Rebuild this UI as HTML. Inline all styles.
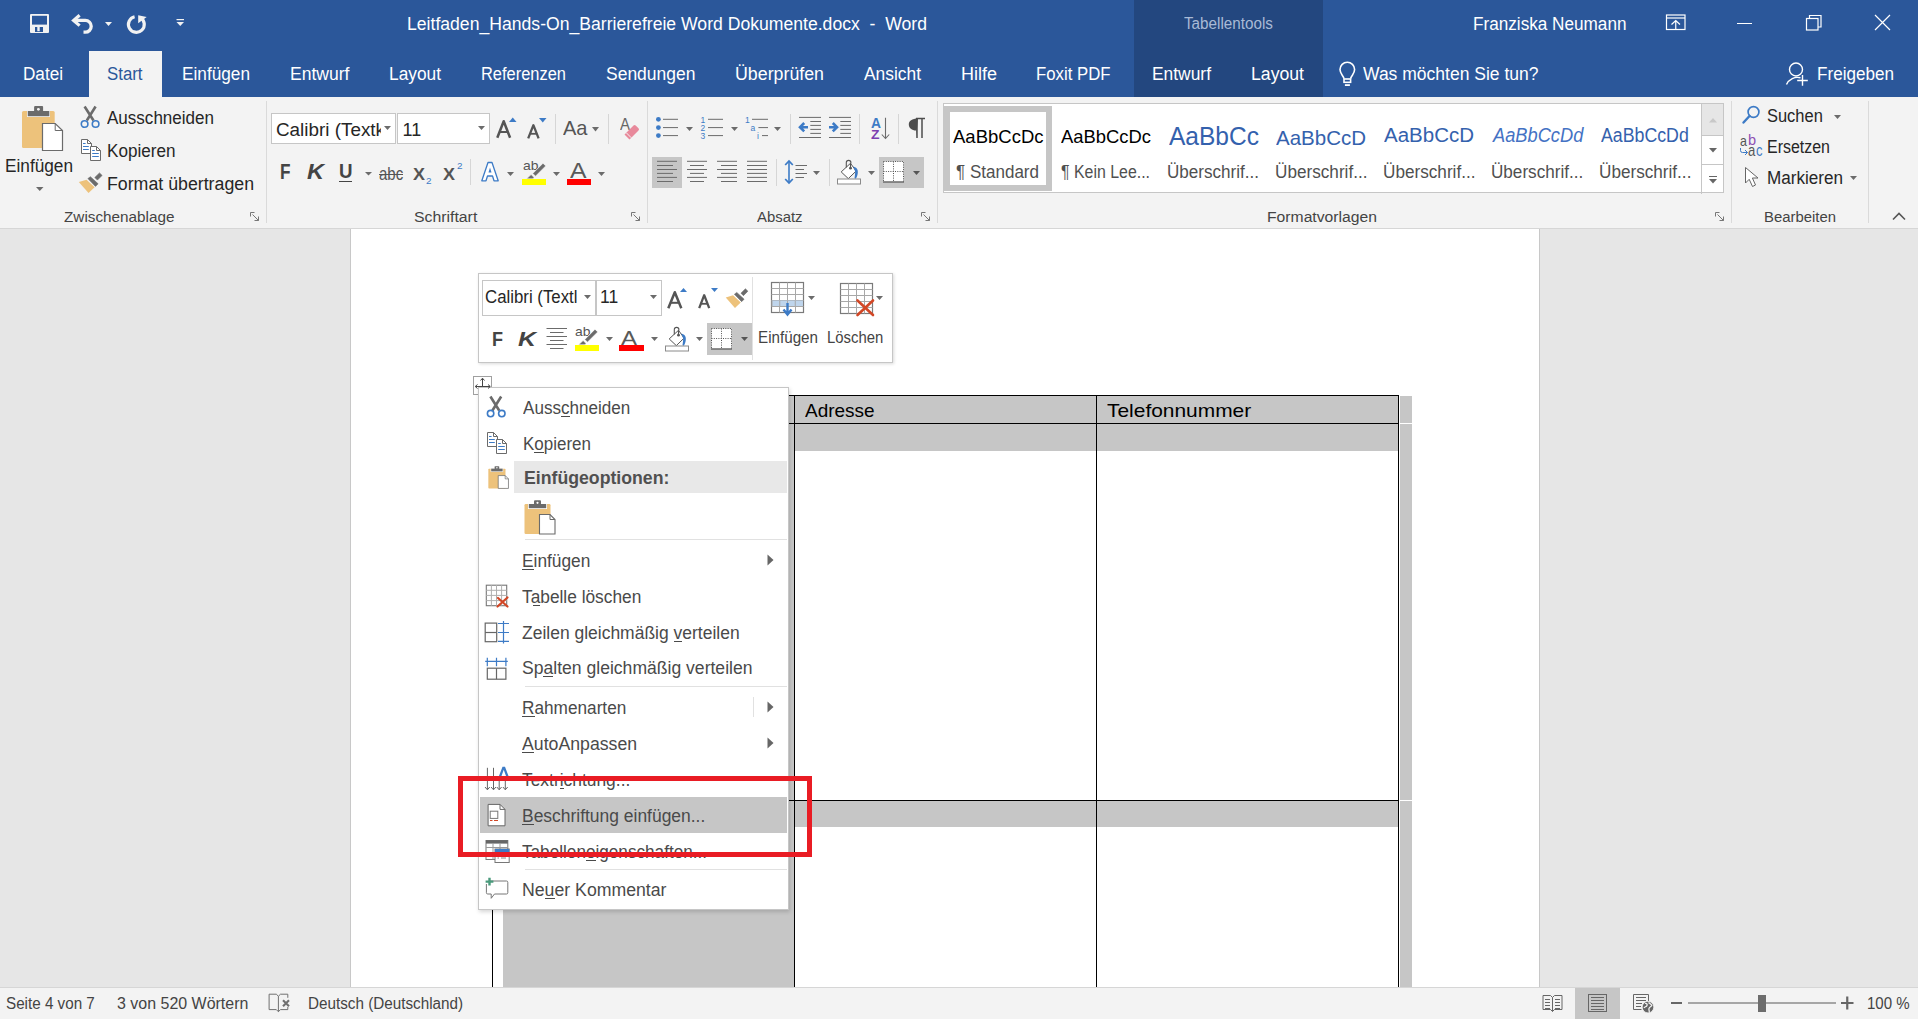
<!DOCTYPE html>
<html><head><meta charset="utf-8"><title>Word</title><style>
html,body{margin:0;padding:0}
body{width:1918px;height:1019px;overflow:hidden;position:relative;font-family:"Liberation Sans",sans-serif;background:#e6e6e6}
.a{position:absolute}
.t{position:absolute;white-space:pre;line-height:1;transform-origin:0 0}
svg{overflow:visible}
</style></head><body>
<div class="a" style="left:0px;top:0px;width:1918px;height:97px;background:#2b579a;"></div>
<div class="a" style="left:1134px;top:0px;width:189px;height:97px;background:#23477f;"></div>
<div class="a" style="left:89px;top:51px;width:73px;height:46px;background:#f3f3f3;"></div>
<div class="a" style="left:0px;top:97px;width:1918px;height:131px;background:#f3f3f3;"></div>
<div class="a" style="left:0px;top:228px;width:1918px;height:1px;background:#d6d6d6;"></div>
<div class="a" style="left:0px;top:229px;width:1918px;height:758px;background:#e6e6e6;"></div>
<div class="a" style="left:351px;top:229px;width:1188px;height:758px;background:#ffffff;"></div>
<div class="a" style="left:350px;top:229px;width:1px;height:758px;background:#c8c8c8;"></div>
<div class="a" style="left:1539px;top:229px;width:1px;height:758px;background:#c8c8c8;"></div>
<div class="a" style="left:0px;top:987px;width:1918px;height:1px;background:#d6d6d6;"></div>
<div class="a" style="left:0px;top:988px;width:1918px;height:31px;background:#f3f3f3;"></div>
<div class="t" style="left:407px;top:15.79px;font-size:17.5px;color:#fff;transform:scaleX(1.0061);">Leitfaden_Hands-On_Barrierefreie Word Dokumente.docx  -  Word</div>
<div class="t" style="left:1184px;top:15.79px;font-size:15.6px;color:#a9bad6;transform:scaleX(0.9773);">Tabellentools</div>
<div class="t" style="left:1473px;top:15.79px;font-size:17.5px;color:#fff;transform:scaleX(0.9802);">Franziska Neumann</div>
<div class="t" style="left:22.5px;top:64.76px;font-size:18px;color:#fff;transform:scaleX(0.9519);">Datei</div>
<div class="t" style="left:182px;top:64.76px;font-size:18px;color:#fff;transform:scaleX(0.9569);">Einfügen</div>
<div class="t" style="left:290px;top:64.76px;font-size:18px;color:#fff;transform:scaleX(0.9750);">Entwurf</div>
<div class="t" style="left:389px;top:64.76px;font-size:18px;color:#fff;transform:scaleX(0.9622);">Layout</div>
<div class="t" style="left:481px;top:64.76px;font-size:18px;color:#fff;transform:scaleX(0.9134);">Referenzen</div>
<div class="t" style="left:606px;top:64.76px;font-size:18px;color:#fff;transform:scaleX(0.9718);">Sendungen</div>
<div class="t" style="left:735px;top:64.76px;font-size:18px;color:#fff;transform:scaleX(0.9883);">Überprüfen</div>
<div class="t" style="left:864px;top:64.76px;font-size:18px;color:#fff;transform:scaleX(0.9656);">Ansicht</div>
<div class="t" style="left:961px;top:64.76px;font-size:18px;color:#fff;transform:scaleX(0.9997);">Hilfe</div>
<div class="t" style="left:1036px;top:64.76px;font-size:18px;color:#fff;transform:scaleX(0.9311);">Foxit PDF</div>
<div class="t" style="left:1152px;top:64.76px;font-size:18px;color:#fff;transform:scaleX(0.9668);">Entwurf</div>
<div class="t" style="left:1251px;top:64.76px;font-size:18px;color:#fff;transform:scaleX(0.9807);">Layout</div>
<div class="t" style="left:1362.5px;top:64.76px;font-size:18px;color:#fff;transform:scaleX(0.9727);">Was möchten Sie tun?</div>
<div class="t" style="left:1816.5px;top:64.76px;font-size:18px;color:#fff;transform:scaleX(0.9500);">Freigeben</div>
<div class="t" style="left:107px;top:64.76px;font-size:18px;color:#2b579a;transform:scaleX(0.9339);">Start</div>
<div class="t" style="left:107px;top:108.76px;font-size:18px;color:#262626;transform:scaleX(0.9462);">Ausschneiden</div>
<div class="t" style="left:107px;top:141.76px;font-size:18px;color:#262626;transform:scaleX(0.9506);">Kopieren</div>
<div class="t" style="left:107px;top:174.76px;font-size:18px;color:#262626;transform:scaleX(0.9861);">Format übertragen</div>
<div class="t" style="left:4.5px;top:156.76px;font-size:18px;color:#262626;transform:scaleX(0.9569);">Einfügen</div>
<div class="t" style="left:64px;top:208.95px;font-size:15.3px;color:#444;transform:scaleX(0.9994);">Zwischenablage</div>
<div class="t" style="left:413.7px;top:208.95px;font-size:15.3px;color:#444;transform:scaleX(1.0340);">Schriftart</div>
<div class="t" style="left:757px;top:208.95px;font-size:15.3px;color:#444;transform:scaleX(0.9727);">Absatz</div>
<div class="t" style="left:1267px;top:208.95px;font-size:15.3px;color:#444;transform:scaleX(1.0266);">Formatvorlagen</div>
<div class="t" style="left:1764px;top:209.35px;font-size:15.3px;color:#444;transform:scaleX(0.9729);">Bearbeiten</div>
<div class="t" style="left:1766.7px;top:106.76px;font-size:18px;color:#262626;transform:scaleX(0.9140);">Suchen</div>
<div class="t" style="left:1767px;top:137.76px;font-size:18px;color:#262626;transform:scaleX(0.8869);">Ersetzen</div>
<div class="t" style="left:1767px;top:169.16px;font-size:18px;color:#262626;transform:scaleX(0.9497);">Markieren</div>
<div class="a" style="left:266px;top:101px;width:1px;height:122px;background:#dadada;"></div>
<div class="a" style="left:647px;top:101px;width:1px;height:122px;background:#dadada;"></div>
<div class="a" style="left:937px;top:101px;width:1px;height:122px;background:#dadada;"></div>
<div class="a" style="left:1731px;top:101px;width:1px;height:122px;background:#dadada;"></div>
<div class="a" style="left:1868px;top:101px;width:1px;height:122px;background:#dadada;"></div>
<div class="a" style="left:271px;top:113px;width:125px;height:31px;background:#fff;border:1px solid #c6c6c6;box-sizing:border-box"></div>
<div class="a" style="left:397px;top:113px;width:93px;height:31px;background:#fff;border:1px solid #c6c6c6;box-sizing:border-box"></div>
<div class="t" style="left:276px;top:120.76px;font-size:18px;color:#262626;transform:scaleX(1.0479);clip-path:inset(-5px 4px -5px -5px);">Calibri (Textk</div>
<div class="t" style="left:402.5px;top:120.76px;font-size:18px;color:#262626;">11</div>
<div class="a" style="left:943px;top:103px;width:781px;height:90px;background:#fff;border:1px solid #c6c6c6;box-sizing:border-box"></div>
<div class="a" style="left:944px;top:106px;width:108px;height:85px;background:#fff;border:6px solid #c6c6c6;box-sizing:border-box"></div>
<div class="a" style="left:1702px;top:104px;width:21px;height:31px;background:#e6e6e6;"></div>
<div class="a" style="left:1702px;top:135px;width:21px;height:1px;background:#c6c6c6;"></div>
<div class="a" style="left:1702px;top:164px;width:21px;height:1px;background:#c6c6c6;"></div>
<div class="a" style="left:1701px;top:103px;width:1px;height:91px;background:#c6c6c6;"></div>
<div class="t" style="left:952.5px;top:126.72px;font-size:19px;color:#000;transform:scaleX(0.9739);">AaBbCcDc</div>
<div class="t" style="left:956px;top:164.19px;font-size:17.5px;color:#505050;transform:scaleX(0.9732);">¶ Standard</div>
<div class="t" style="left:1061px;top:126.72px;font-size:19px;color:#000;transform:scaleX(0.9685);">AaBbCcDc</div>
<div class="t" style="left:1061px;top:164.19px;font-size:17.5px;color:#505050;transform:scaleX(0.9088);">¶ Kein Lee...</div>
<div class="t" style="left:1169px;top:122.57px;font-size:26.5px;color:#3461ad;transform:scaleX(0.9258);">AaBbCc</div>
<div class="t" style="left:1167px;top:164.19px;font-size:17.5px;color:#505050;transform:scaleX(0.9753);">Überschrif...</div>
<div class="t" style="left:1276px;top:126.72px;font-size:21px;color:#3461ad;transform:scaleX(0.9761);">AaBbCcD</div>
<div class="t" style="left:1275px;top:164.19px;font-size:17.5px;color:#505050;transform:scaleX(0.9806);">Überschrif...</div>
<div class="t" style="left:1384px;top:126.29px;font-size:19.5px;color:#3461ad;transform:scaleX(1.0512);">AaBbCcD</div>
<div class="t" style="left:1383px;top:164.19px;font-size:17.5px;color:#505050;transform:scaleX(0.9806);">Überschrif...</div>
<div class="t" style="left:1492.7px;top:126.29px;font-size:19.5px;color:#4472c4;font-style:italic;transform:scaleX(0.9361);">AaBbCcDd</div>
<div class="t" style="left:1491.4px;top:164.19px;font-size:17.5px;color:#505050;transform:scaleX(0.9774);">Überschrif...</div>
<div class="t" style="left:1601px;top:126.29px;font-size:19.5px;color:#3461ad;transform:scaleX(0.9102);">AaBbCcDd</div>
<div class="t" style="left:1599px;top:164.19px;font-size:17.5px;color:#505050;transform:scaleX(0.9795);">Überschrif...</div>
<div class="t" style="left:6.2px;top:995.93px;font-size:15.8px;color:#444;transform:scaleX(0.9628);">Seite 4 von 7</div>
<div class="t" style="left:116.8px;top:995.93px;font-size:15.8px;color:#444;transform:scaleX(1.0109);">3 von 520 Wörtern</div>
<div class="t" style="left:308.4px;top:995.93px;font-size:15.8px;color:#444;transform:scaleX(0.9651);">Deutsch (Deutschland)</div>
<div class="t" style="left:1867px;top:995.93px;font-size:15.8px;color:#444;transform:scaleX(0.9531);">100 %</div>
<div class="a" style="left:1575px;top:988px;width:45px;height:31px;background:#c6c6c6;"></div>
<div class="a" style="left:1688px;top:1002px;width:148px;height:2px;background:#a6a6a6;"></div>
<div class="a" style="left:1758px;top:995px;width:8px;height:17px;background:#6d6d6d;"></div>
<div class="a" style="left:503px;top:395px;width:291px;height:592px;background:#c6c6c6;"></div>
<div class="a" style="left:794px;top:395px;width:604px;height:28px;background:#c6c6c6;"></div>
<div class="a" style="left:794px;top:424px;width:604px;height:27px;background:#c6c6c6;"></div>
<div class="a" style="left:794px;top:801px;width:604px;height:26px;background:#c6c6c6;"></div>
<div class="a" style="left:1400px;top:396px;width:12px;height:591px;background:#c6c6c6;"></div>
<div class="a" style="left:1400px;top:423px;width:12px;height:1px;background:#fff;"></div>
<div class="a" style="left:1400px;top:800px;width:12px;height:1px;background:#fff;"></div>
<div class="a" style="left:492px;top:395px;width:1px;height:592px;background:#000;"></div>
<div class="a" style="left:794px;top:395px;width:1px;height:592px;background:#000;"></div>
<div class="a" style="left:1096px;top:395px;width:1px;height:592px;background:#000;"></div>
<div class="a" style="left:1398px;top:395px;width:1px;height:592px;background:#000;"></div>
<div class="a" style="left:492px;top:395px;width:907px;height:1px;background:#000;"></div>
<div class="a" style="left:492px;top:423px;width:907px;height:1px;background:#000;"></div>
<div class="a" style="left:492px;top:800px;width:907px;height:1px;background:#000;"></div>
<div class="t" style="left:805.4px;top:401.54px;font-size:18.5px;color:#000;transform:scaleX(1.0240);">Adresse</div>
<div class="t" style="left:1107.3px;top:401.54px;font-size:18.5px;color:#000;transform:scaleX(1.1309);">Telefonnummer</div>
<div class="a" style="left:478px;top:273px;width:415px;height:90px;background:#fff;border:1px solid #c6c6c6;box-sizing:border-box;box-shadow:1px 1px 3px rgba(0,0,0,.15)"></div>
<div class="a" style="left:482px;top:280px;width:114px;height:36px;background:#fff;border:1px solid #c6c6c6;box-sizing:border-box"></div>
<div class="a" style="left:596px;top:280px;width:66px;height:36px;background:#fff;border:1px solid #c6c6c6;box-sizing:border-box"></div>
<div class="t" style="left:485.4px;top:288.99px;font-size:17.5px;color:#262626;transform:scaleX(0.9608);">Calibri (Textl</div>
<div class="t" style="left:600px;top:288.99px;font-size:17.5px;color:#262626;">11</div>
<div class="a" style="left:752px;top:277px;width:1px;height:83px;background:#e1e1e1;"></div>
<div class="t" style="left:757.6px;top:328.81px;font-size:17px;color:#444;transform:scaleX(0.8940);">Einfügen</div>
<div class="t" style="left:827.3px;top:328.81px;font-size:17px;color:#444;transform:scaleX(0.8759);">Löschen</div>
<div class="a" style="left:707px;top:323px;width:45px;height:32px;background:#c6c6c6;"></div>
<div class="a" style="left:473px;top:376px;width:19px;height:19px;background:#fff;border:1px solid #a0a0a0;box-sizing:border-box"></div>
<div class="a" style="left:478px;top:387px;width:311px;height:523px;background:#fff;border:1px solid #c6c6c6;box-sizing:border-box;box-shadow:1px 2px 4px rgba(0,0,0,.16)"></div>
<div class="a" style="left:514px;top:461px;width:273px;height:32px;background:#e8e8e8;"></div>
<div class="a" style="left:480px;top:797px;width:307px;height:36px;background:#c6c6c6;"></div>
<div class="a" style="left:525px;top:539px;width:262px;height:1px;background:#e1e1e1;"></div>
<div class="a" style="left:525px;top:686px;width:262px;height:1px;background:#e1e1e1;"></div>
<div class="a" style="left:525px;top:869px;width:262px;height:1px;background:#e1e1e1;"></div>
<div class="a" style="left:753px;top:697px;width:1px;height:20px;background:#e1e1e1;"></div>
<div class="a" style="left:560.97px;top:416.00px;width:8.54px;height:1px;background:#4a4a4a"></div>
<div class="t" style="left:523px;top:400.19px;font-size:17.5px;color:#4a4a4a;transform:scaleX(0.9760);">Ausschneiden</div>
<div class="a" style="left:534.33px;top:452.00px;width:9.45px;height:1px;background:#4a4a4a"></div>
<div class="t" style="left:523px;top:436.19px;font-size:17.5px;color:#4a4a4a;transform:scaleX(0.9707);">Kopieren</div>
<div class="t" style="left:524px;top:470.19px;font-size:17.5px;color:#505050;font-weight:bold;transform:scaleX(1.0107);">Einfügeoptionen:</div>
<div class="a" style="left:522.20px;top:569.00px;width:11.56px;height:1px;background:#4a4a4a"></div>
<div class="t" style="left:522.2px;top:553.19px;font-size:17.5px;color:#4a4a4a;transform:scaleX(0.9900);">Einfügen</div>
<div class="a" style="left:532.57px;top:605.00px;width:7.71px;height:1px;background:#4a4a4a"></div>
<div class="t" style="left:522px;top:589.19px;font-size:17.5px;color:#4a4a4a;transform:scaleX(0.9889);">Tabelle löschen</div>
<div class="a" style="left:673.54px;top:640.60px;width:8.74px;height:1px;background:#4a4a4a"></div>
<div class="t" style="left:522px;top:624.79px;font-size:17.5px;color:#4a4a4a;transform:scaleX(0.9987);">Zeilen gleichmäßig verteilen</div>
<div class="a" style="left:543.49px;top:676.20px;width:9.77px;height:1px;background:#4a4a4a"></div>
<div class="t" style="left:522px;top:660.39px;font-size:17.5px;color:#4a4a4a;transform:scaleX(1.0040);">Spalten gleichmäßig verteilen</div>
<div class="a" style="left:522.40px;top:715.50px;width:12.43px;height:1px;background:#4a4a4a"></div>
<div class="t" style="left:522.4px;top:699.69px;font-size:17.5px;color:#4a4a4a;transform:scaleX(0.9836);">Rahmenarten</div>
<div class="a" style="left:522.40px;top:751.60px;width:11.80px;height:1px;background:#4a4a4a"></div>
<div class="t" style="left:522.4px;top:735.79px;font-size:17.5px;color:#4a4a4a;transform:scaleX(1.0111);">AutoAnpassen</div>
<div class="a" style="left:560.10px;top:787.80px;width:3.87px;height:1px;background:#4a4a4a"></div>
<div class="t" style="left:522.4px;top:771.99px;font-size:17.5px;color:#4a4a4a;transform:scaleX(0.9941);">Textrichtung...</div>
<div class="a" style="left:522.40px;top:823.80px;width:11.64px;height:1px;background:#4a4a4a"></div>
<div class="t" style="left:522.4px;top:807.99px;font-size:17.5px;color:#4a4a4a;transform:scaleX(0.9969);">Beschriftung einfügen...</div>
<div class="a" style="left:586.33px;top:860.00px;width:9.54px;height:1px;background:#4a4a4a"></div>
<div class="t" style="left:522.4px;top:844.19px;font-size:17.5px;color:#4a4a4a;transform:scaleX(0.9806);">Tabelleneigenschaften...</div>
<div class="a" style="left:545.01px;top:898.20px;width:9.84px;height:1px;background:#4a4a4a"></div>
<div class="t" style="left:522.4px;top:882.39px;font-size:17.5px;color:#4a4a4a;transform:scaleX(1.0106);">Neuer Kommentar</div>
<svg class="a" style="left:29px;top:13px" width="21" height="21" viewBox="0 0 21 21"><rect x="1" y="1" width="19" height="19" rx="1" fill="#f2f2f2"/><rect x="3" y="2.8" width="15" height="8.8" fill="#2b579a"/><rect x="6" y="14" width="8" height="5" fill="#2b579a"/><rect x="8.3" y="14" width="2.4" height="4.2" fill="#f2f2f2"/></svg>
<svg class="a" style="left:70px;top:13px" width="26" height="23" viewBox="0 0 26 23"><path d="M9.6 2.2L3.6 7.4L9.6 12.6" fill="none" stroke="#f2f2f2" stroke-width="3.2" stroke-miterlimit="6"/><path d="M4.5 7.4H15.3A5.9 5.9 0 0 1 15.3 19.2H13.5" fill="none" stroke="#f2f2f2" stroke-width="3.3"/></svg>
<svg class="a" style="left:105.0px;top:22.0px" width="7" height="4" viewBox="0 0 7 4"><path d="M0 0H7L3.5 4Z" fill="#f2f2f2"/></svg>
<svg class="a" style="left:125px;top:13px" width="24" height="23" viewBox="0 0 24 23"><path d="M9.6 3.7A7.9 7.9 0 1 0 15.4 4.6" fill="none" stroke="#f2f2f2" stroke-width="3.2"/><path d="M13.2 2.2L21.7 4L13.2 10.2Z" fill="#f2f2f2"/></svg>
<svg class="a" style="left:176px;top:18px" width="9" height="9" viewBox="0 0 9 9"><rect x="0.5" y="1" width="7.5" height="1.2" fill="#f2f2f2"/><path d="M0.5 4H8L4.25 8Z" fill="#f2f2f2"/></svg>
<svg class="a" style="left:1665px;top:14px" width="22" height="17" viewBox="0 0 22 17"><rect x="1.5" y="1" width="18.5" height="14.5" fill="none" stroke="#fff" stroke-width="1.2"/><path d="M1.5 4H20" stroke="#fff" stroke-width="1.2"/><path d="M10.75 15.5V6.5 M6.5 10.5L10.75 6.5L15 10.5" fill="none" stroke="#fff" stroke-width="1.2"/></svg>
<div class="a" style="left:1737px;top:23px;width:15px;height:1.3px;background:#fff;"></div>
<svg class="a" style="left:1805px;top:14px" width="18" height="17" viewBox="0 0 18 17"><rect x="1.5" y="4.5" width="11.5" height="11.5" fill="none" stroke="#fff" stroke-width="1.2"/><path d="M4.5 4.5V1.5H16V13H13" fill="none" stroke="#fff" stroke-width="1.2"/></svg>
<svg class="a" style="left:1874px;top:14px" width="17" height="17" viewBox="0 0 17 17"><path d="M1 1L16 16M16 1L1 16" stroke="#fff" stroke-width="1.2"/></svg>
<svg class="a" style="left:1337px;top:60px" width="21" height="28" viewBox="0 0 21 28"><path d="M7 18.6C6.3 15.5 3 13.8 3 9.6A7.3 7.3 0 0 1 17.6 9.6C17.6 13.8 14.3 15.5 13.6 18.6" fill="none" stroke="#fff" stroke-width="1.6"/><rect x="7" y="19" width="6.6" height="3.3" fill="none" stroke="#fff" stroke-width="1.6"/><rect x="7.9" y="24.2" width="5" height="1.8" fill="#fff"/></svg>
<svg class="a" style="left:1785px;top:60px" width="24" height="28" viewBox="0 0 24 28"><circle cx="11" cy="9.5" r="6.5" fill="none" stroke="#fff" stroke-width="1.4"/><path d="M1.5 24.5 A12 12 0 0 1 15.5 17.8" fill="none" stroke="#fff" stroke-width="1.4"/><path d="M17.5 15V25.8 M12.2 20.5H22.8" stroke="#fff" stroke-width="1.4"/></svg>
<svg class="a" style="left:21px;top:105px" width="43" height="47" viewBox="0 0 43 47"><rect x="1" y="6" width="32.7" height="37" rx="1.5" fill="#edc27b"/><rect x="6" y="5.5" width="23" height="6.5" fill="#f3f3f3"/><rect x="6.8" y="6" width="21.5" height="5.2" fill="#6b6b6b"/><rect x="13.1" y="1" width="9" height="6" rx="1" fill="#6b6b6b"/><circle cx="17.4" cy="4.3" r="1.4" fill="#f3f3f3"/><path d="M21.5 18.5H34.2L41.5 25.5V45.5H21.5Z" fill="#fff" stroke="#6b6b6b" stroke-width="1.2"/><path d="M34.2 18.5V25.5H41.5" fill="none" stroke="#6b6b6b" stroke-width="1"/></svg>
<svg class="a" style="left:35.75px;top:186.8px" width="7.5" height="4" viewBox="0 0 7.5 4"><path d="M0 0H7.5L3.75 4Z" fill="#6b6b6b"/></svg>
<svg class="a" style="left:80px;top:105px" width="21" height="24" viewBox="0 0 21 24"><path d="M4.6 1.5L13.5 15.5 M15.6 1.5L6.8 15.5" stroke="#6b6b6b" stroke-width="2.6"/><circle cx="4.6" cy="19" r="3.3" fill="#f3f3f3" stroke="#3d7bc6" stroke-width="1.6"/><circle cx="15.6" cy="19" r="3.3" fill="#f3f3f3" stroke="#3d7bc6" stroke-width="1.6"/></svg>
<svg class="a" style="left:80px;top:138px" width="22" height="24" viewBox="0 0 22 24"><path d="M1.5 15.5V1.5H7.5L11.5 5.5V15.5Z" fill="#fff" stroke="#6b6b6b" stroke-width="1"/><path d="M7.5 1.5V5.5H11.5" fill="none" stroke="#6b6b6b" stroke-width="1"/><path d="M3 5.5H5.6M3 8.5H8.8M3 11.5H8.8" stroke="#3d7bc6" stroke-width="1"/><path d="M10.5 8.5H16.5L20.5 12.5V22.5H10.5Z" fill="#fff" stroke="#6b6b6b" stroke-width="1"/><path d="M16.5 8.5V12.5H20.5" fill="none" stroke="#6b6b6b" stroke-width="1"/><path d="M12.2 12.5H14.8M12.2 15.5H18.8M12.2 18.5H18.8" stroke="#3d7bc6" stroke-width="1"/></svg>
<svg class="a" style="left:78px;top:171px" width="26" height="24" viewBox="0 0 26 24"><path d="M16.8 6.5L21.5 1.9L24.1 4.4L19.4 9.1Z" fill="#6b6b6b" stroke="#6b6b6b" stroke-width="0.6" stroke-linejoin="round"/><path d="M9.9 7.6L12.4 5.7L20.1 12.8L17.5 15.4Z" fill="#6b6b6b" stroke="#6b6b6b" stroke-width="0.6" stroke-linejoin="round"/><path d="M0.8 11.1L8.5 8.8L16.6 16.2L10.5 22Z" fill="#edc27b"/></svg>
<svg class="a" style="left:383.5px;top:125.5px" width="7" height="4" viewBox="0 0 7 4"><path d="M0 0H7L3.5 4Z" fill="#6b6b6b"/></svg>
<svg class="a" style="left:477.5px;top:125.5px" width="7" height="4" viewBox="0 0 7 4"><path d="M0 0H7L3.5 4Z" fill="#6b6b6b"/></svg>
<svg class="a" style="left:496px;top:120px" width="16" height="18" viewBox="0 0 16 18"><path d="M1.3 17.8L7.7 1.2L14.1 17.8" fill="none" stroke="#555" stroke-width="2.5" stroke-linejoin="round"/><path d="M3.8 12H11.6" stroke="#555" stroke-width="2"/></svg>
<svg class="a" style="left:509px;top:117px" width="8" height="5" viewBox="0 0 8 5"><path d="M0 5H7.5L3.75 0.5Z" fill="#3d7bc6"/></svg>
<svg class="a" style="left:526.5px;top:123.5px" width="14" height="15" viewBox="0 0 14 15"><path d="M1.2 14.3L6.4 1.2L11.6 14.3" fill="none" stroke="#555" stroke-width="2.3" stroke-linejoin="round"/><path d="M3.2 9.8H9.6" stroke="#555" stroke-width="1.8"/></svg>
<svg class="a" style="left:539px;top:117.5px" width="8" height="5" viewBox="0 0 8 5"><path d="M0 0H7.5L3.75 4.5Z" fill="#3d7bc6"/></svg>
<div class="a" style="left:555px;top:114px;width:1px;height:30px;background:#d6d6d6;"></div>
<div class="t" style="left:563px;top:117.42px;font-size:21px;color:#555;transform:scaleX(0.9538);">Aa</div>
<svg class="a" style="left:592.0px;top:126.55000000000001px" width="7" height="4.5" viewBox="0 0 7 4.5"><path d="M0 0H7L3.5 4.5Z" fill="#6b6b6b"/></svg>
<div class="a" style="left:608px;top:114px;width:1px;height:30px;background:#d6d6d6;"></div>
<div class="t" style="left:620px;top:116.41px;font-size:17px;color:#666;transform:scaleX(0.8819);">A</div>
<svg class="a" style="left:622px;top:122px" width="19" height="19" viewBox="0 0 19 19"><path d="M2.5 12.5L11.5 3.5A1.5 1.5 0 0 1 13.7 3.5L16.5 6.3A1.5 1.5 0 0 1 16.5 8.5L7.5 17.5Z" fill="#e8899b"/><path d="M4.3 10.8L9.3 15.8" stroke="#f3f3f3" stroke-width="1"/></svg>
<div class="t" style="left:280px;top:161.38px;font-size:22px;color:#444;font-weight:bold;transform:scaleX(0.7813);">F</div>
<div class="t" style="left:306.5px;top:161.38px;font-size:22px;color:#444;font-weight:bold;font-style:italic;transform:scaleX(1.0700);">K</div>
<div class="t" style="left:338.5px;top:161.79px;font-size:19.5px;color:#444;font-weight:bold;transform:scaleX(0.9586);">U</div>
<div class="a" style="left:338.8px;top:180.5px;width:13.3px;height:1.3px;background:#444;"></div>
<svg class="a" style="left:364.9px;top:171.95px" width="7" height="3.5" viewBox="0 0 7 3.5"><path d="M0 0H7L3.5 3.5Z" fill="#6b6b6b"/></svg>
<div class="t" style="left:378.8px;top:163.92px;font-size:19px;color:#555;transform:scaleX(0.7900);">abc</div>
<div class="a" style="left:378.8px;top:174.2px;width:24.2px;height:1.1px;background:#555;"></div>
<div class="t" style="left:413px;top:166.03px;font-size:16.5px;color:#555;font-weight:bold;transform:scaleX(1.0903);">X</div>
<div class="t" style="left:426px;top:176.16px;font-size:9.5px;color:#3d7bc6;transform:scaleX(1.0410);">2</div>
<div class="t" style="left:443px;top:166.03px;font-size:16.5px;color:#555;font-weight:bold;transform:scaleX(1.0903);">X</div>
<div class="t" style="left:456.5px;top:160.96px;font-size:9.5px;color:#3d7bc6;transform:scaleX(1.0410);">2</div>
<div class="a" style="left:470px;top:159px;width:1px;height:26px;background:#d6d6d6;"></div>
<svg class="a" style="left:480px;top:161px" width="20" height="22" viewBox="0 0 20 22"><path d="M1.8 19.8L8 1.5H12L18.2 19.8H14L12.5 15H7.5L6 19.8Z" fill="#fff" stroke="#3d7bc6" stroke-width="1.3" stroke-linejoin="round"/><path d="M8.5 11.5L10 6.5L11.5 11.5Z" fill="#3d7bc6"/></svg>
<svg class="a" style="left:507.0px;top:172.0px" width="7" height="4" viewBox="0 0 7 4"><path d="M0 0H7L3.5 4Z" fill="#6b6b6b"/></svg>
<div class="t" style="left:522.5px;top:159.37px;font-size:13.5px;color:#555;transform:scaleX(1.0322);">ab</div>
<svg class="a" style="left:526px;top:162px" width="21" height="18" viewBox="0 0 21 18"><path d="M6.7 11.5L17 1.2L19.8 3.9L9.5 14.2Z" fill="#6b6b6b" stroke="#f3f3f3" stroke-width="0.8" stroke-linejoin="round"/><path d="M0.6 16.8L5.1 12.6L8.1 15.4L7 16.8Z" fill="#6b6b6b" stroke="#f3f3f3" stroke-width="0.6"/></svg>
<div class="a" style="left:522px;top:179px;width:24px;height:6px;background:#ffff00;"></div>
<svg class="a" style="left:553.0px;top:172.0px" width="7" height="4" viewBox="0 0 7 4"><path d="M0 0H7L3.5 4Z" fill="#6b6b6b"/></svg>
<div class="t" style="left:569.5px;top:159.95px;font-size:22.5px;color:#595959;transform:scaleX(1.0994);">A</div>
<div class="a" style="left:567px;top:179px;width:24px;height:6px;background:#ff0000;"></div>
<svg class="a" style="left:598.0px;top:172.0px" width="7" height="4" viewBox="0 0 7 4"><path d="M0 0H7L3.5 4Z" fill="#6b6b6b"/></svg>
<svg class="a" style="left:249.5px;top:212px" width="10" height="10" viewBox="0 0 10 10"><path d="M0.5 0.5H4.5M0.5 0.5V4.5" stroke="#777" stroke-width="1"/><path d="M2.5 2.5L8.5 8.5M8.5 4.5V8.5H4.5" fill="none" stroke="#777" stroke-width="1"/></svg>
<svg class="a" style="left:631px;top:212px" width="10" height="10" viewBox="0 0 10 10"><path d="M0.5 0.5H4.5M0.5 0.5V4.5" stroke="#777" stroke-width="1"/><path d="M2.5 2.5L8.5 8.5M8.5 4.5V8.5H4.5" fill="none" stroke="#777" stroke-width="1"/></svg>
<svg class="a" style="left:920.5px;top:212px" width="10" height="10" viewBox="0 0 10 10"><path d="M0.5 0.5H4.5M0.5 0.5V4.5" stroke="#777" stroke-width="1"/><path d="M2.5 2.5L8.5 8.5M8.5 4.5V8.5H4.5" fill="none" stroke="#777" stroke-width="1"/></svg>
<svg class="a" style="left:1714.5px;top:212px" width="10" height="10" viewBox="0 0 10 10"><path d="M0.5 0.5H4.5M0.5 0.5V4.5" stroke="#777" stroke-width="1"/><path d="M2.5 2.5L8.5 8.5M8.5 4.5V8.5H4.5" fill="none" stroke="#777" stroke-width="1"/></svg>
<svg class="a" style="left:1892px;top:211px" width="15" height="10" viewBox="0 0 15 10"><path d="M1 8.5L7 2.5L13 8.5" fill="none" stroke="#555" stroke-width="1.6"/></svg>
<svg class="a" style="left:655px;top:115px" width="25" height="24" viewBox="0 0 25 24"><circle cx="3.4" cy="4.3" r="2.4" fill="#3d7bc6"/><circle cx="3.4" cy="12.6" r="2.4" fill="#3d7bc6"/><circle cx="3.4" cy="20.6" r="2.4" fill="#3d7bc6"/><path d="M8 4.3H23M8 12.6H23M8 20.6H23" stroke="#6b6b6b" stroke-width="1"/></svg>
<svg class="a" style="left:686.0px;top:127.0px" width="7" height="4" viewBox="0 0 7 4"><path d="M0 0H7L3.5 4Z" fill="#6b6b6b"/></svg>
<svg class="a" style="left:700px;top:114px" width="25" height="26" viewBox="0 0 25 26"><text x="0.5" y="9" font-size="8.5" fill="#3d7bc6" font-family="Liberation Sans">1</text><text x="0.5" y="17" font-size="8.5" fill="#3d7bc6" font-family="Liberation Sans">2</text><text x="0.5" y="25" font-size="8.5" fill="#3d7bc6" font-family="Liberation Sans">3</text><path d="M8 5.3H23M8 13.6H23M8 21.6H23" stroke="#6b6b6b" stroke-width="1"/></svg>
<svg class="a" style="left:731.0px;top:127.0px" width="7" height="4" viewBox="0 0 7 4"><path d="M0 0H7L3.5 4Z" fill="#6b6b6b"/></svg>
<svg class="a" style="left:744px;top:114px" width="26" height="26" viewBox="0 0 26 26"><text x="1" y="9" font-size="8.5" fill="#3d7bc6" font-family="Liberation Sans">1</text><text x="6.5" y="17" font-size="8.5" fill="#3d7bc6" font-family="Liberation Sans">a</text><text x="13" y="25" font-size="8.5" fill="#3d7bc6" font-family="Liberation Sans">i</text><path d="M8 5.3H24M14.4 13.6H24M18 21.6H24" stroke="#6b6b6b" stroke-width="1"/></svg>
<svg class="a" style="left:774.0px;top:127.0px" width="7" height="4" viewBox="0 0 7 4"><path d="M0 0H7L3.5 4Z" fill="#6b6b6b"/></svg>
<div class="a" style="left:790px;top:114px;width:1px;height:30px;background:#d6d6d6;"></div>
<svg class="a" style="left:798px;top:115px" width="24" height="25" viewBox="0 0 24 25"><path d="M1 2.4H23M12.3 6.5H23M12.3 10.4H23M12.3 14.4H23M12.3 18.4H23M1 22.5H23" stroke="#6b6b6b" stroke-width="1"/><path d="M10 12.2H2.5M6.2 8L2 12.2L6.2 16.4" fill="none" stroke="#3d7bc6" stroke-width="2.6"/></svg>
<svg class="a" style="left:828px;top:115px" width="24" height="25" viewBox="0 0 24 25"><path d="M1 2.4H23M12.3 6.5H23M12.3 10.4H23M12.3 14.4H23M12.3 18.4H23M1 22.5H23" stroke="#6b6b6b" stroke-width="1"/><path d="M1 12.2H8.5M4.8 8L9 12.2L4.8 16.4" fill="none" stroke="#3d7bc6" stroke-width="2.6"/></svg>
<div class="a" style="left:859px;top:114px;width:1px;height:30px;background:#d6d6d6;"></div>
<div class="t" style="left:870.5px;top:115.53px;font-size:14.5px;color:#3d7bc6;font-weight:bold;transform:scaleX(0.9550);">A</div>
<div class="t" style="left:871.3px;top:127.80px;font-size:13px;color:#7c3fb0;font-weight:bold;transform:scaleX(1.0704);">Z</div>
<svg class="a" style="left:880px;top:116px" width="11" height="24" viewBox="0 0 11 24"><path d="M5.5 1.8V22.5M1.8 18.5L5.5 22.5L9.2 18.5" fill="none" stroke="#6b6b6b" stroke-width="1.1"/></svg>
<div class="a" style="left:898px;top:114px;width:1px;height:30px;background:#d6d6d6;"></div>
<svg class="a" style="left:908px;top:117px" width="18" height="22" viewBox="0 0 18 22"><path d="M10 1.5C4 1.5 0.8 4 0.8 7.5C0.8 11 4 13.5 8 13.5V21" fill="#4d4d4d"/><path d="M8 1.5H17M9 1.5V21M14 1.5V21" stroke="#4d4d4d" stroke-width="1.5"/></svg>
<div class="a" style="left:652px;top:157px;width:30px;height:31px;background:#c6c6c6;"></div>
<svg class="a" style="left:657px;top:157px" width="20" height="31" viewBox="0 0 20 31"><path d="M0 4.300000000000011H20" stroke="#6b6b6b" stroke-width="1"/><path d="M0 8.5H16" stroke="#6b6b6b" stroke-width="1"/><path d="M0 12.5H20" stroke="#6b6b6b" stroke-width="1"/><path d="M0 16.400000000000006H16" stroke="#6b6b6b" stroke-width="1"/><path d="M0 20.400000000000006H20" stroke="#6b6b6b" stroke-width="1"/><path d="M0 24.5H16" stroke="#6b6b6b" stroke-width="1"/></svg>
<svg class="a" style="left:687px;top:157px" width="20" height="31" viewBox="0 0 20 31"><path d="M0 4.300000000000011H20" stroke="#6b6b6b" stroke-width="1"/><path d="M3 8.5H17" stroke="#6b6b6b" stroke-width="1"/><path d="M0 12.5H20" stroke="#6b6b6b" stroke-width="1"/><path d="M3 16.400000000000006H17" stroke="#6b6b6b" stroke-width="1"/><path d="M0 20.400000000000006H20" stroke="#6b6b6b" stroke-width="1"/><path d="M3 24.5H17" stroke="#6b6b6b" stroke-width="1"/></svg>
<svg class="a" style="left:717px;top:157px" width="20" height="31" viewBox="0 0 20 31"><path d="M0 4.300000000000011H20" stroke="#6b6b6b" stroke-width="1"/><path d="M4 8.5H20" stroke="#6b6b6b" stroke-width="1"/><path d="M0 12.5H20" stroke="#6b6b6b" stroke-width="1"/><path d="M4 16.400000000000006H20" stroke="#6b6b6b" stroke-width="1"/><path d="M0 20.400000000000006H20" stroke="#6b6b6b" stroke-width="1"/><path d="M4 24.5H20" stroke="#6b6b6b" stroke-width="1"/></svg>
<svg class="a" style="left:747px;top:157px" width="20" height="31" viewBox="0 0 20 31"><path d="M0 4.300000000000011H20" stroke="#6b6b6b" stroke-width="1"/><path d="M0 8.5H20" stroke="#6b6b6b" stroke-width="1"/><path d="M0 12.5H20" stroke="#6b6b6b" stroke-width="1"/><path d="M0 16.400000000000006H20" stroke="#6b6b6b" stroke-width="1"/><path d="M0 20.400000000000006H20" stroke="#6b6b6b" stroke-width="1"/><path d="M0 24.5H20" stroke="#6b6b6b" stroke-width="1"/></svg>
<div class="a" style="left:776px;top:159px;width:1px;height:27px;background:#d6d6d6;"></div>
<svg class="a" style="left:784px;top:159px" width="24" height="26" viewBox="0 0 24 26"><path d="M5 3V23" stroke="#3d7bc6" stroke-width="1.6"/><path d="M1.2 6L5 2L8.8 6M1.2 20L5 24L8.8 20" fill="none" stroke="#3d7bc6" stroke-width="1.8"/><path d="M11.5 6.5H23M11.5 10.5H20M11.5 14.5H23M11.5 18.5H20" stroke="#6b6b6b" stroke-width="1"/></svg>
<svg class="a" style="left:813.0px;top:171.0px" width="7" height="4" viewBox="0 0 7 4"><path d="M0 0H7L3.5 4Z" fill="#6b6b6b"/></svg>
<div class="a" style="left:829px;top:159px;width:1px;height:27px;background:#d6d6d6;"></div>
<svg class="a" style="left:836px;top:159.5px" width="26" height="25" viewBox="0 0 26 25"><path d="M5.2 11.9L14.5 3.3L20.1 11.1L12.3 18.6Z" fill="#fff" stroke="#555" stroke-width="1"/><path d="M10.3 7.5V2.7A2.3 2.3 0 0 1 14.9 2.7V3.6M14.5 3.3V8" fill="none" stroke="#555" stroke-width="1.1"/><circle cx="14.5" cy="8.2" r="1.4" fill="#555"/><path d="M17.2 6.6C21 7.4 22.2 10 21.8 13C21.5 15.5 20.7 17 19.9 18.8L18.5 18.2C18.9 15.5 19.3 13 19.1 11.2Z" fill="#3d7bc6"/><rect x="1.5" y="19" width="23" height="5" fill="#fff" stroke="#8a8a8a" stroke-width="1"/></svg>
<svg class="a" style="left:868.0px;top:170.5px" width="7" height="4" viewBox="0 0 7 4"><path d="M0 0H7L3.5 4Z" fill="#6b6b6b"/></svg>
<div class="a" style="left:879px;top:157px;width:45px;height:31px;background:#c6c6c6;"></div>
<svg class="a" style="left:883px;top:160.5px" width="22" height="22" viewBox="0 0 22 22"><rect x="0.5" y="0.5" width="20" height="20" fill="#fff"/><path d="M0.5 0.5H20.5V20.5M0.5 0.5V20.5M10.5 0.5V20.5M0.5 10.5H20.5" fill="none" stroke="#555" stroke-width="1" stroke-dasharray="1 1.3"/><path d="M0 21H21" stroke="#555" stroke-width="1.2"/></svg>
<svg class="a" style="left:913.0px;top:170.5px" width="7" height="4" viewBox="0 0 7 4"><path d="M0 0H7L3.5 4Z" fill="#555"/></svg>
<svg class="a" style="left:1709px;top:117.5px" width="8" height="5" viewBox="0 0 8 5"><path d="M0 4.5H8L4 0Z" fill="#c8c8c8"/></svg>
<svg class="a" style="left:1709.0px;top:148.25px" width="8" height="4.5" viewBox="0 0 8 4.5"><path d="M0 0H8L4.0 4.5Z" fill="#666"/></svg>
<div class="a" style="left:1709px;top:176px;width:8px;height:1.2px;background:#666;"></div>
<svg class="a" style="left:1709.0px;top:178.75px" width="8" height="4.5" viewBox="0 0 8 4.5"><path d="M0 0H8L4.0 4.5Z" fill="#666"/></svg>
<svg class="a" style="left:1740px;top:104px" width="22" height="22" viewBox="0 0 22 22"><circle cx="13.5" cy="8" r="5.4" fill="none" stroke="#3d7bc6" stroke-width="1.7"/><path d="M9.5 12L3.5 18.5" stroke="#3d7bc6" stroke-width="2.4" stroke-linecap="round"/></svg>
<svg class="a" style="left:1834.0px;top:114.5px" width="7" height="4" viewBox="0 0 7 4"><path d="M0 0H7L3.5 4Z" fill="#6b6b6b"/></svg>
<div class="t" style="left:1739.8px;top:133.00px;font-size:15px;color:#555;transform:scaleX(0.8271);">a</div>
<div class="t" style="left:1748.4px;top:133.43px;font-size:14.5px;color:#8e4fb4;transform:scaleX(1.0044);">b</div>
<div class="t" style="left:1747.8px;top:141.81px;font-size:17px;color:#555;transform:scaleX(0.7721);">a</div>
<div class="t" style="left:1755.8px;top:141.81px;font-size:17px;color:#3d7bc6;transform:scaleX(0.7647);">c</div>
<svg class="a" style="left:1739px;top:146px" width="10" height="10" viewBox="0 0 10 10"><path d="M1.5 2V4.5A2 2 0 0 0 3.5 6.5H8.5M6 4L8.5 6.5L6 9" fill="none" stroke="#3d7bc6" stroke-width="1"/></svg>
<svg class="a" style="left:1744px;top:166px" width="17" height="23" viewBox="0 0 17 23"><path d="M1.5 1.5V17L5.2 13.3L8.5 20.5L11.5 19L8.4 12H14Z" fill="#fff" stroke="#666" stroke-width="1" stroke-linejoin="round"/></svg>
<svg class="a" style="left:1850.0px;top:176.0px" width="7" height="4" viewBox="0 0 7 4"><path d="M0 0H7L3.5 4Z" fill="#6b6b6b"/></svg>
<svg class="a" style="left:583.5px;top:295.0px" width="7" height="4" viewBox="0 0 7 4"><path d="M0 0H7L3.5 4Z" fill="#6b6b6b"/></svg>
<svg class="a" style="left:649.5px;top:295.0px" width="7" height="4" viewBox="0 0 7 4"><path d="M0 0H7L3.5 4Z" fill="#6b6b6b"/></svg>
<svg class="a" style="left:667px;top:290.5px" width="16" height="18" viewBox="0 0 16 18"><path d="M1.3 17.2L7.8 1.2L14.3 17.2" fill="none" stroke="#555" stroke-width="2.5" stroke-linejoin="round"/><path d="M3.8 11.8H11.8" stroke="#555" stroke-width="2"/></svg>
<svg class="a" style="left:680px;top:288px" width="8" height="4" viewBox="0 0 8 4"><path d="M0 4H7L3.5 0Z" fill="#3d7bc6"/></svg>
<svg class="a" style="left:697.8px;top:293.5px" width="13" height="15" viewBox="0 0 13 15"><path d="M1.2 14.2L6.2 1.2L11.2 14.2" fill="none" stroke="#555" stroke-width="2.3" stroke-linejoin="round"/><path d="M3.2 9.8H9.2" stroke="#555" stroke-width="1.8"/></svg>
<svg class="a" style="left:710.5px;top:288px" width="7" height="4" viewBox="0 0 7 4"><path d="M0 0H7L3.5 4Z" fill="#3d7bc6"/></svg>
<svg class="a" style="left:724.6px;top:287px" width="26" height="23" viewBox="0 0 26 23"><g transform="scale(0.95)"><path d="M16.8 6.5L21.5 1.9L24.1 4.4L19.4 9.1Z" fill="#6b6b6b" stroke="#6b6b6b" stroke-width="0.6" stroke-linejoin="round"/><path d="M9.9 7.6L12.4 5.7L20.1 12.8L17.5 15.4Z" fill="#6b6b6b" stroke="#6b6b6b" stroke-width="0.6" stroke-linejoin="round"/><path d="M0.8 11.1L8.5 8.8L16.6 16.2L10.5 22Z" fill="#edc27b"/></g></svg>
<div class="t" style="left:491.5px;top:327.62px;font-size:21px;color:#444;font-weight:bold;transform:scaleX(0.8575);">F</div>
<div class="t" style="left:517.5px;top:327.62px;font-size:21px;color:#444;font-weight:bold;font-style:italic;transform:scaleX(1.1869);">K</div>
<svg class="a" style="left:546px;top:326px" width="22" height="23" viewBox="0 0 22 23"><path d="M0.5 2.5H21M4 6.5H17.5M0.5 10.5H21M4 14.5H17.5M0.5 18.5H21M4 22.5H17.5" stroke="#6b6b6b" stroke-width="1"/></svg>
<div class="t" style="left:575px;top:324.57px;font-size:13.5px;color:#555;transform:scaleX(1.0322);">ab</div>
<svg class="a" style="left:577.9px;top:327.5px" width="21" height="18" viewBox="0 0 21 18"><path d="M6.7 11.5L17 1.2L19.8 3.9L9.5 14.2Z" fill="#6b6b6b" stroke="#fff" stroke-width="0.8" stroke-linejoin="round"/><path d="M0.6 16.8L5.1 12.6L8.1 15.4L7 16.8Z" fill="#6b6b6b" stroke="#fff" stroke-width="0.6"/></svg>
<div class="a" style="left:574.5px;top:344.5px;width:24.5px;height:6px;background:#ffff00;"></div>
<svg class="a" style="left:606.0px;top:337.0px" width="7" height="4" viewBox="0 0 7 4"><path d="M0 0H7L3.5 4Z" fill="#6b6b6b"/></svg>
<div class="t" style="left:621px;top:326.72px;font-size:21px;color:#595959;transform:scaleX(1.1422);">A</div>
<div class="a" style="left:619px;top:345px;width:25px;height:6px;background:#ff0000;"></div>
<svg class="a" style="left:651.0px;top:337.0px" width="7" height="4" viewBox="0 0 7 4"><path d="M0 0H7L3.5 4Z" fill="#6b6b6b"/></svg>
<svg class="a" style="left:663.7px;top:326.7px" width="26" height="25" viewBox="0 0 26 25"><path d="M5.2 11.9L14.5 3.3L20.1 11.1L12.3 18.6Z" fill="#fff" stroke="#555" stroke-width="1"/><path d="M10.3 7.5V2.7A2.3 2.3 0 0 1 14.9 2.7V3.6M14.5 3.3V8" fill="none" stroke="#555" stroke-width="1.1"/><circle cx="14.5" cy="8.2" r="1.4" fill="#555"/><path d="M17.2 6.6C21 7.4 22.2 10 21.8 13C21.5 15.5 20.7 17 19.9 18.8L18.5 18.2C18.9 15.5 19.3 13 19.1 11.2Z" fill="#3d7bc6"/><rect x="1.5" y="19" width="23" height="5" fill="#fff" stroke="#8a8a8a" stroke-width="1"/></svg>
<svg class="a" style="left:696.0px;top:337.0px" width="7" height="4" viewBox="0 0 7 4"><path d="M0 0H7L3.5 4Z" fill="#6b6b6b"/></svg>
<svg class="a" style="left:711px;top:328px" width="22" height="22" viewBox="0 0 22 22"><rect x="0.5" y="0.5" width="20" height="20" fill="#fff"/><path d="M0.5 0.5H20.5V20.5M0.5 0.5V20.5M10.5 0.5V20.5M0.5 10.5H20.5" fill="none" stroke="#555" stroke-width="1" stroke-dasharray="1 1.3"/><path d="M0 21H21" stroke="#555" stroke-width="1.2"/></svg>
<svg class="a" style="left:741.0px;top:337.0px" width="7" height="4" viewBox="0 0 7 4"><path d="M0 0H7L3.5 4Z" fill="#555"/></svg>
<svg class="a" style="left:771px;top:282px" width="34" height="36" viewBox="0 0 34 36"><rect x="0.5" y="0.5" width="32" height="30" fill="#fff" stroke="#7a7a7a" stroke-width="1.2"/><path d="M8.50 0.5V30.5" stroke="#a8a8a8" stroke-width="1"/><path d="M16.50 0.5V30.5" stroke="#a8a8a8" stroke-width="1"/><path d="M24.50 0.5V30.5" stroke="#a8a8a8" stroke-width="1"/><path d="M0.5 6.50H32.5" stroke="#a8a8a8" stroke-width="1"/><path d="M0.5 12.50H32.5" stroke="#a8a8a8" stroke-width="1"/><path d="M0.5 18.50H32.5" stroke="#a8a8a8" stroke-width="1"/><path d="M0.5 24.50H32.5" stroke="#a8a8a8" stroke-width="1"/><rect x="1" y="18.5" width="31" height="5.5" fill="#b8d0ea" opacity="0.9"/><path d="M1 18.5V24M8.75 18.5V24M16.5 18.5V24M24.25 18.5V24" stroke="#a8a8a8" stroke-width="1"/><path d="M16.5 21V31.5M12.5 27.5L16.5 32.5L20.5 27.5" fill="none" stroke="#3d7bc6" stroke-width="2.4"/></svg>
<svg class="a" style="left:808.0px;top:296.0px" width="7" height="4" viewBox="0 0 7 4"><path d="M0 0H7L3.5 4Z" fill="#6b6b6b"/></svg>
<svg class="a" style="left:840px;top:283px" width="34" height="36" viewBox="0 0 34 36"><rect x="0.5" y="0.5" width="32" height="30" fill="#fff" stroke="#7a7a7a" stroke-width="1.2"/><path d="M8.50 0.5V30.5" stroke="#a8a8a8" stroke-width="1"/><path d="M16.50 0.5V30.5" stroke="#a8a8a8" stroke-width="1"/><path d="M24.50 0.5V30.5" stroke="#a8a8a8" stroke-width="1"/><path d="M0.5 6.50H32.5" stroke="#a8a8a8" stroke-width="1"/><path d="M0.5 12.50H32.5" stroke="#a8a8a8" stroke-width="1"/><path d="M0.5 18.50H32.5" stroke="#a8a8a8" stroke-width="1"/><path d="M0.5 24.50H32.5" stroke="#a8a8a8" stroke-width="1"/><path d="M17.5 17.5L33 32M33 17.5L17.5 32" stroke="#d24726" stroke-width="2.6" stroke-linecap="round"/></svg>
<svg class="a" style="left:876.0px;top:296.0px" width="7" height="4" viewBox="0 0 7 4"><path d="M0 0H7L3.5 4Z" fill="#6b6b6b"/></svg>
<svg class="a" style="left:474px;top:377px" width="18" height="18" viewBox="0 0 18 18"><path d="M8.5 1.5V9.5M1.5 9.5H16" fill="none" stroke="#444" stroke-width="1"/><path d="M6.5 3.5L8.5 1.2L10.5 3.5M3.5 7.5L1.2 9.5L3.5 11.5M14 7.5L16.3 9.5L14 11.5" fill="none" stroke="#444" stroke-width="1"/></svg>
<svg class="a" style="left:485px;top:395px" width="22" height="24" viewBox="0 0 22 24"><path d="M5.4 1.5L14.2 15.5 M16.2 1.5L7.4 15.5" stroke="#6b6b6b" stroke-width="2.6"/><circle cx="5.6" cy="18.6" r="3.2" fill="#fff" stroke="#3d7bc6" stroke-width="1.6"/><circle cx="16.8" cy="18.6" r="3.2" fill="#fff" stroke="#3d7bc6" stroke-width="1.6"/></svg>
<svg class="a" style="left:486px;top:431px" width="22" height="24" viewBox="0 0 22 24"><path d="M1.5 15.5V1.5H7.5L11.5 5.5V15.5Z" fill="#fff" stroke="#6b6b6b" stroke-width="1"/><path d="M7.5 1.5V5.5H11.5" fill="none" stroke="#6b6b6b" stroke-width="1"/><path d="M3 5.5H5.6M3 8.5H8.8M3 11.5H8.8" stroke="#3d7bc6" stroke-width="1"/><path d="M10.5 8.5H16.5L20.5 12.5V22.5H10.5Z" fill="#fff" stroke="#6b6b6b" stroke-width="1"/><path d="M16.5 8.5V12.5H20.5" fill="none" stroke="#6b6b6b" stroke-width="1"/><path d="M12.2 12.5H14.8M12.2 15.5H18.8M12.2 18.5H18.8" stroke="#3d7bc6" stroke-width="1"/></svg>
<svg class="a" style="left:488px;top:466px" width="22.44" height="23.76" viewBox="0 0 22.44 23.76"><g transform="scale(0.66)"><rect x="0.5" y="4" width="26" height="30" rx="1.2" fill="#edc27b"/><rect x="4" y="3.5" width="19" height="5.5" fill="#fff"/><rect x="4.8" y="4" width="17.4" height="4.2" fill="#6b6b6b"/><rect x="10" y="0.3" width="7" height="4.5" rx="1" fill="#6b6b6b"/><circle cx="13.5" cy="2.8" r="1.1" fill="#fff"/><path d="M15.5 14.5H26L31 19.5V34H15.5Z" fill="#fff" stroke="#6b6b6b" stroke-width="1.1"/><path d="M26 14.5V19.5H31" fill="none" stroke="#6b6b6b" stroke-width="1"/></g></svg>
<svg class="a" style="left:524px;top:500px" width="34.0" height="36.0" viewBox="0 0 34.0 36.0"><g transform="scale(1.0)"><rect x="0.5" y="4" width="26" height="30" rx="1.2" fill="#edc27b"/><rect x="4" y="3.5" width="19" height="5.5" fill="#fff"/><rect x="4.8" y="4" width="17.4" height="4.2" fill="#6b6b6b"/><rect x="10" y="0.3" width="7" height="4.5" rx="1" fill="#6b6b6b"/><circle cx="13.5" cy="2.8" r="1.1" fill="#fff"/><path d="M15.5 14.5H26L31 19.5V34H15.5Z" fill="#fff" stroke="#6b6b6b" stroke-width="1.1"/><path d="M26 14.5V19.5H31" fill="none" stroke="#6b6b6b" stroke-width="1"/></g></svg>
<svg class="a" style="left:767px;top:554px" width="7" height="12" viewBox="0 0 7 12"><path d="M0.5 0.5L6.5 6L0.5 11.5Z" fill="#666"/></svg>
<svg class="a" style="left:767px;top:701px" width="7" height="12" viewBox="0 0 7 12"><path d="M0.5 0.5L6.5 6L0.5 11.5Z" fill="#666"/></svg>
<svg class="a" style="left:767px;top:737px" width="7" height="12" viewBox="0 0 7 12"><path d="M0.5 0.5L6.5 6L0.5 11.5Z" fill="#666"/></svg>
<svg class="a" style="left:485px;top:584px" width="25" height="25" viewBox="0 0 25 25"><rect x="1.3" y="1.2" width="20.4" height="20.5" fill="#fff" stroke="#777" stroke-width="1.1"/><path d="M6.4 1.2V21.7M11.5 1.2V21.7M16.6 1.2V21.7M1.3 6.3H21.7M1.3 11.4H21.7M1.3 16.6H21.7" stroke="#b0b0b0" stroke-width="1"/><path d="M13 14L22.5 22.5M22.5 13.5L12.5 22.5" stroke="#d24726" stroke-width="2.2" stroke-linecap="round"/></svg>
<svg class="a" style="left:484px;top:620px" width="26" height="25" viewBox="0 0 26 25"><rect x="1.2" y="3.1" width="11.5" height="18.6" fill="none" stroke="#666" stroke-width="1.2"/><path d="M1.2 12.5H12.7" stroke="#666" stroke-width="1.2"/><path d="M19.5 1V23.6M14 3.5H25M14 12.5H25M14 21.4H25" stroke="#3d7bc6" stroke-width="1.2"/></svg>
<svg class="a" style="left:484px;top:656px" width="26" height="25" viewBox="0 0 26 25"><rect x="3.3" y="12.2" width="18.6" height="11" fill="none" stroke="#666" stroke-width="1.2"/><path d="M12.5 12.2V23.2" stroke="#666" stroke-width="1.2"/><path d="M1.2 5.4H23.8M3.3 1.8V10.3M12.5 1.8V10.3M21.9 1.8V10.3" stroke="#3d7bc6" stroke-width="1.2"/></svg>
<svg class="a" style="left:484px;top:766px" width="26" height="26" viewBox="0 0 26 26"><path d="M3.4 1.8V23.5M9.5 1.8V23.5M15.2 10V23.5M21.3 10V23.5" stroke="#666" stroke-width="1"/><path d="M1 21L3.4 23.8L5.8 21M7.1 21L9.5 23.8L11.9 21M12.8 21L15.2 23.8L17.6 21M18.9 21L21.3 23.8L23.7 21" fill="none" stroke="#666" stroke-width="1"/><path d="M14.8 10.5L18.5 0.8H21L24.7 10.5H22.2L19.75 3.8L17.3 10.5Z" fill="#3d7bc6"/></svg>
<svg class="a" style="left:486px;top:803px" width="22" height="25" viewBox="0 0 22 25"><path d="M2.1 1.4H14L19 6.4V22.8H2.1Z" fill="#fff" stroke="#666" stroke-width="1"/><path d="M14 1.4V6.4H19" fill="none" stroke="#666" stroke-width="1"/><rect x="4.2" y="8.2" width="7.6" height="7.2" fill="none" stroke="#777" stroke-width="1"/><path d="M4 17.5H6.5M8 17.5H12" stroke="#d24726" stroke-width="1"/></svg>
<svg class="a" style="left:484px;top:839px" width="27" height="26" viewBox="0 0 27 26"><rect x="2" y="1.5" width="21.8" height="19" fill="#fff" stroke="#777" stroke-width="1"/><rect x="2" y="1.4" width="21.8" height="3.2" fill="#666"/><path d="M2 8.5H23.8M2 13.5H11M9 4.5V20.5M16 4.5V10" stroke="#999" stroke-width="1"/><rect x="11" y="10" width="14.2" height="13.5" fill="#fff" stroke="#777" stroke-width="1"/><rect x="11" y="10" width="14.2" height="4" fill="#3d7bc6"/><path d="M13.5 19H15M17 19H22" stroke="#888" stroke-width="1"/></svg>
<svg class="a" style="left:484px;top:876px" width="26" height="25" viewBox="0 0 26 25"><path d="M5 5H22.5A1.3 1.3 0 0 1 23.8 6.3V16.7A1.3 1.3 0 0 1 22.5 18H10.5L7.2 22.3V18H3.7A1.3 1.3 0 0 1 2.4 16.7V8" fill="#fff" stroke="#777" stroke-width="1"/><path d="M5.5 1.8V9.5M1.6 5.6H9.4" stroke="#4a9a7c" stroke-width="2.4"/></svg>
<svg class="a" style="left:268px;top:993px" width="24" height="20" viewBox="0 0 24 20"><path d="M10.4 3.2L8.3 1.2H1.1V16.6H8.3L10.4 18.7L12.5 16.6H19.8V14M19.8 4.8V1.2H12.5L10.4 3.2V18.7" fill="none" stroke="#707070" stroke-width="1"/><path d="M15 7.2L21 13.2M21 7.2L15 13.2" stroke="#707070" stroke-width="2.1"/></svg>
<svg class="a" style="left:1542px;top:993px" width="22" height="20" viewBox="0 0 22 20"><path d="M1 2.5H8.5L10.5 4.5L12.5 2.5H20V16.5H12.5L10.5 18.5L8.5 16.5H1Z" fill="none" stroke="#666" stroke-width="1"/><path d="M10.5 4.5V18.5M3 6.5H8M3 9.5H8M3 12.5H8M3 15.5H8M13 6.5H18M13 9.5H18M13 12.5H18M13 15.5H18" stroke="#666" stroke-width="1"/></svg>
<svg class="a" style="left:1587px;top:993px" width="22" height="20" viewBox="0 0 22 20"><rect x="1.5" y="1.5" width="18" height="17" fill="none" stroke="#666" stroke-width="1"/><path d="M4 4.5H17M4 7.5H17M4 10.5H17M4 13.5H17M4 16.5H17" stroke="#666" stroke-width="1"/></svg>
<svg class="a" style="left:1632px;top:993px" width="24" height="22" viewBox="0 0 24 22"><path d="M1.5 1.5H16.5V8M1.5 1.5V16.5H9.5" fill="none" stroke="#666" stroke-width="1"/><path d="M4 4.5H14M4 7.5H14M4 10.5H10M4 13.5H9" stroke="#666" stroke-width="1"/><circle cx="16" cy="14.1" r="5.8" fill="#666" stroke="#f3f3f3" stroke-width="0.8"/><path d="M13 10.5C14.5 10 15.5 11 15 12.5S12.5 13.5 12 15M16.5 9.5C17.5 10.5 19 10.5 19.8 12.5C19 14 17.5 13.5 17 15.5S18 18.5 17 19.5" fill="none" stroke="#f3f3f3" stroke-width="1.3"/></svg>
<div class="a" style="left:1671px;top:1002px;width:11px;height:2.2px;background:#666;"></div>
<svg class="a" style="left:1841px;top:996px" width="13" height="14" viewBox="0 0 13 14"><path d="M6.25 0.5V13.5M0 7H12.5" stroke="#666" stroke-width="2.2"/></svg>
<div class="a" style="left:458px;top:776px;width:354px;height:81px;background:transparent;border:5px solid #e91c24;box-sizing:border-box"></div>
</body></html>
